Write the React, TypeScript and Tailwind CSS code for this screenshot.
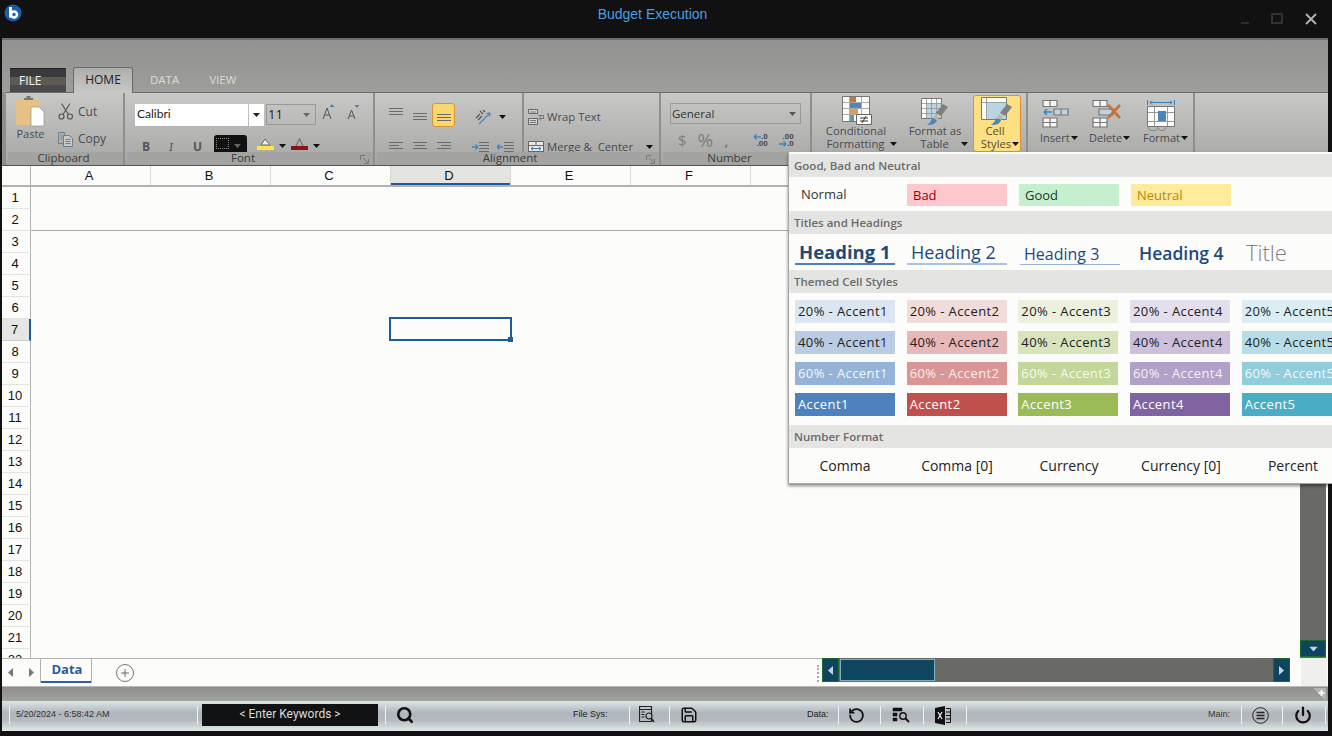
import { Search, Save, RotateCcw, Power, Plus } from 'lucide-react';

const columns = ['A', 'B', 'C', 'D', 'E', 'F', '', '', '', '', ''];
const rows = Array.from({ length: 22 }, (_, i) => i + 1);

const swatchRows = [
  [
    { text: '20% - Accent1', cls: 'bg-[#dce6f1] text-[#222]' },
    { text: '20% - Accent2', cls: 'bg-[#f2dcdb] text-[#222]' },
    { text: '20% - Accent3', cls: 'bg-[#ebf1de] text-[#222]' },
    { text: '20% - Accent4', cls: 'bg-[#e4dfec] text-[#222]' },
    { text: '20% - Accent5', cls: 'bg-[#daeef3] text-[#222]' },
  ],
  [
    { text: '40% - Accent1', cls: 'bg-[#b8cce4] text-[#222]' },
    { text: '40% - Accent2', cls: 'bg-[#e6b8b7] text-[#222]' },
    { text: '40% - Accent3', cls: 'bg-[#d8e4bc] text-[#222]' },
    { text: '40% - Accent4', cls: 'bg-[#ccc0da] text-[#222]' },
    { text: '40% - Accent5', cls: 'bg-[#b7dee8] text-[#222]' },
  ],
  [
    { text: '60% - Accent1', cls: 'bg-[#95b3d7] text-[#f4f6fa]' },
    { text: '60% - Accent2', cls: 'bg-[#da9694] text-[#f8eeee]' },
    { text: '60% - Accent3', cls: 'bg-[#c4d79b] text-[#f6f9ee]' },
    { text: '60% - Accent4', cls: 'bg-[#b1a0c7] text-[#f4f0f8]' },
    { text: '60% - Accent5', cls: 'bg-[#92cddc] text-[#f0f9fb]' },
  ],
  [
    { text: 'Accent1', cls: 'bg-[#4f81bd] text-white' },
    { text: 'Accent2', cls: 'bg-[#c0504d] text-white' },
    { text: 'Accent3', cls: 'bg-[#9bbb59] text-white' },
    { text: 'Accent4', cls: 'bg-[#8064a2] text-white' },
    { text: 'Accent5', cls: 'bg-[#4bacc6] text-white' },
  ],
];

function Caret({ className = '' }: { className?: string }) {
  return (
    <svg width="7" height="4" viewBox="0 0 7 4" className={className}>
      <path d="M0 0h7L3.500 4z" fill="currentColor" />
    </svg>
  );
}

function Lines({ className = '', widths = [14, 14, 14], align = 'left' }: { className?: string; widths?: number[]; align?: string }) {
  return (
    <svg width="14" height="7" viewBox="0 0 14 7" className={className}>
      {widths.map((w, i) => {
        const x = align === 'right' ? 14 - w : align === 'center' ? (14 - w) / 2 : 0;
        return <rect key={i} x={x} y={i * 3} width={w} height="1" fill="#6b6c6a" />;
      })}
    </svg>
  );
}

function PasteIcon() {
  return (
    <svg width="29" height="31" viewBox="0 0 29 31">
      <rect x="0" y="3" width="24" height="26" fill="#e6c186" />
      <path d="M8 4V2h2.500V0h4v2H17v2z" fill="#777" />
      <path d="M15 11h8l5 5v14H15z" fill="#fdfdfb" stroke="#8a8a88" strokeWidth="0.600" />
    </svg>
  );
}

function ScissorsIcon() {
  return (
    <svg width="16" height="17" viewBox="0 0 16 17" fill="none" stroke="#555" strokeWidth="1.200">
      <circle cx="3.500" cy="13.500" r="2.500" />
      <circle cx="12" cy="13.500" r="2.500" />
      <path d="M5 11.500 12 .500M10.500 11.500 3.500.500" />
    </svg>
  );
}

function CopyIcon() {
  return (
    <svg width="16" height="15" viewBox="0 0 16 15" fill="none" stroke="#6e7f8c" strokeWidth="1">
      <path d="M.5.500h6v11h-6z" />
      <path d="M5.500 3.500h6l3 3v8h-9z" fill="#c8c9c6" />
      <path d="M7.500 7.500h5M7.500 9.500h5M7.500 11.500h5" stroke="#5a88ad" />
      <path d="M2 3h3M2 5h3M2 7h3" stroke="#7a8d9a" />
    </svg>
  );
}

function GrowFont({ up }: { up: boolean }) {
  return (
    <svg width="13" height="16" viewBox="0 0 13 16" fill="none">
      <path d={up ? 'M1 15 5 4l4 11M2.500 11h5' : 'M1 15 4.500 6 8 15M2.200 12h4.500'} stroke="#555" strokeWidth="1" />
      <path d={up ? 'M7.500 3 10 0l2.500 3z' : 'M7.500 1h5L10 4z'} fill="#4a86b8" />
    </svg>
  );
}

function WrapIcon() {
  return (
    <svg width="16" height="16" viewBox="0 0 16 16" fill="none" stroke="#666">
      <path d="M.5.500h9v4h-9zM.5 9.500h9v6h-9z" fill="#d5d6d3" />
      <path d="M2 3h6M2 11.500h6M2 13.500h6" stroke="#777" />
      <path d="M10 6.500h5.500v3h-4M13 7.500l-2 2 2 2" stroke="#6a7a85" />
    </svg>
  );
}

function MergeIcon() {
  return (
    <svg width="16" height="15" viewBox="0 0 16 15" fill="none" stroke="#666" className="shrink-0">
      <path d="M.5.500h15v14H.5z" fill="#e8e9e6" />
      <path d="M.5 4.500h15M.5 10.500h15M8 .500v4M8 10.500v4" />
      <path d="M3 7.500h10M3 7.500l2-1.500M3 7.500 5 9M13 7.500 11 6M13 7.500 11 9" stroke="#3c7db0" />
    </svg>
  );
}

function OrientIcon() {
  return (
    <svg width="17" height="15" viewBox="0 0 17 15" fill="none" className="ml-[20px] mt-[7px]">
      <path d="M1 8 5 4M3 10l4-4" stroke="#555" strokeWidth="1.300" />
      <path d="M5 1l3 3M8 0l2 2" stroke="#555" strokeWidth="1.200" />
      <path d="M4 14 15 3M15 3l-3.500.500M15 3l-.500 3.500" stroke="#4a86b8" strokeWidth="1.200" />
    </svg>
  );
}

function IndentIcon({ back }: { back?: boolean }) {
  return (
    <svg width="17" height="10" viewBox="0 0 17 10" fill="none">
      <path d="M7 .500h10M7 3.500h10M7 6.500h10M7 9.500h10" stroke="#6b6c6a" />
      <path d={back ? 'M0 5h6M0 5l2.500-2.500M0 5l2.500 2.500' : 'M0 5h6M6 5 3.500 2.500M6 5 3.500 7.500'} stroke="#3c85c0" strokeWidth="1.300" />
    </svg>
  );
}

function DecimalIcon({ more }: { more?: boolean }) {
  return (
    <div className="relative w-[15px] h-[14px] text-right text-[8px] leading-[7px] font-['Liberation_Sans',sans-serif] font-bold text-[#444]">
      <div>{more ? '.00' : '.0'}</div>
      <div>{more ? '.0' : '.00'}</div>
      <svg width="8" height="6" viewBox="0 0 8 6" className={`absolute left-0 ${more ? 'top-[8px]' : 'top-px'}`}>
        <path d={more ? 'M0 3h7M7 3 4.500.500M7 3 4.500 5.500' : 'M8 3H1M1 3 3.500.500M1 3 3.500 5.500'} stroke="#3c85c0" strokeWidth="1.300" fill="none" />
      </svg>
    </div>
  );
}

function GridIcon() {
  return (
    <svg width="30" height="29" viewBox="0 0 30 29">
      <path d="M.5.500h27v25H.5z" fill="#fbfbf9" stroke="#777" />
      <path d="M8 6h11v6H8z" fill="#4f85b8" />
      <path d="M8 1h6v5H8z" fill="#c86f45" />
      <path d="M8 12h8v6H8z" fill="#de9d5b" />
      <path d="M8 18h4v7H8z" fill="#6c99a0" />
      <path d="M7.500 1v24M19.500 1v24M1 6.500h26M1 12.500h26M1 18.500h26" stroke="#aaa" fill="none" />
      <path d="M14.500 18.500h15v10h-15z" fill="#fdfdfb" stroke="#666" />
      <path d="M18 22h8M18 25h8M20 27l4-7" stroke="#333" fill="none" />
    </svg>
  );
}

function Brush({ x, y }: { x: number; y: number }) {
  return (
    <g transform={`translate(${x} ${y})`}>
      <path d="M17 0l5 3-7 9-5-3z" fill="#7f7f7d" />
      <path d="M9 10l4 3-2 3-4-2z" fill="#c2b79a" />
      <path d="M6 14l5 2c-1 4-4 5-10 5 3-2 4-4 5-7z" fill="#4f85b8" />
    </g>
  );
}

function TableIcon() {
  return (
    <svg width="28" height="27" viewBox="0 0 28 27">
      <path d="M.5.500h20v20H.5z" fill="#fbfbf9" stroke="#777" />
      <path d="M5 5h15v15H5z" fill="#bcd4e2" />
      <path d="M5.500 1v20M10.500 1v20M15.500 1v20M1 5.500h20M1 10.500h20M1 15.500h20" stroke="#8a8b88" fill="none" strokeWidth="0.700" />
      <Brush x={5} y={6} />
    </svg>
  );
}

function CellStylesIcon() {
  return (
    <svg width="32" height="28" viewBox="0 0 32 28">
      <path d="M.5.500h25v22H.5z" fill="#fbfbf9" stroke="#777" />
      <path d="M6 6h19v16H6z" fill="#b8d5e4" />
      <path d="M5.500 1v22M1 5.500h25" stroke="#8a8b88" fill="none" strokeWidth="0.800" />
      <Brush x={9} y={7} />
    </svg>
  );
}

function InsertIcon() {
  return (
    <svg width="27" height="28" viewBox="0 0 27 28" fill="none" stroke="#777" strokeWidth="1.200">
      <path d="M1 .500h14v6H1zM8 .500v6" fill="#f6f6f4" />
      <path d="M12 9h14v6H12zM19 9v6" fill="#bcd4e2" />
      <path d="M1 18h14v9H1zM8 18v9M1 22.500h14" fill="#f6f6f4" />
      <path d="M2 12h8M2 12l3-3M2 12l3 3" stroke="#3c85c0" strokeWidth="1.600" />
    </svg>
  );
}

function DeleteIcon() {
  return (
    <svg width="29" height="28" viewBox="0 0 29 28" fill="none" stroke="#777" strokeWidth="1.200">
      <path d="M1 .500h14v6H1zM8 .500v6" fill="#f6f6f4" />
      <path d="M7 9h14v6H7z" fill="#bcd4e2" />
      <path d="M1 18h14v9H1zM8 18v9M1 22.500h14" fill="#f6f6f4" />
      <path d="M16 5l12 13M28 5 16 18" stroke="#c8703f" strokeWidth="2.800" />
    </svg>
  );
}

function FormatIcon() {
  return (
    <svg width="28" height="31" viewBox="0 0 28 31" fill="none">
      <path d="M.5 0v5M27.500 0v5M3 2.500h22M3 2.500l2-2M3 2.500l2 2M25 2.500l-2-2M25 2.500l-2 2" stroke="#3c7db0" />
      <path d="M.5 6.500h27v20H.5z" fill="#fbfbf9" stroke="#777" />
      <path d="M7.500 7v19M20.500 7v19M1 12.500h26M1 21.500h26" stroke="#999" />
      <path d="M11 11h8v10h-8z" fill="#4a86b8" />
      <path d="M1 26.500l2 4h6l2-3 2 3h4l2-3" stroke="#888" />
    </svg>
  );
}

function Group({ width, label, labelPad = '', launcher, children }: { width: string; label?: string; labelPad?: string; launcher?: boolean; children: React.ReactNode }) {
  return (
    <div className={`${width} shrink-0 flex flex-col border-r-2 border-[#8e8f8c]`}>
      <div className="h-[59px] overflow-hidden">{children}</div>
      {label && (
        <div className={`relative h-[13px] ml-[2px] bg-[#a3a4a1] text-center text-[11.500px] leading-[12px] text-[#3b3b3b] ${labelPad}`}>
          {label}
          {launcher && (
            <svg width="9" height="9" viewBox="0 0 9 9" className="absolute right-[4px] top-[3px]" fill="none" stroke="#777">
              <path d="M.5 5V.500H5M3 3l5 5M8.500 4v4.500H4" />
            </svg>
          )}
        </div>
      )}
    </div>
  );
}

function StyleHeader({ children }: { children: React.ReactNode }) {
  return <div className="h-[23px] bg-[#e4e5e3] pl-[5px] text-[11.500px] leading-[23px] font-semibold text-[#6c6a6a]">{children}</div>;
}

function StatusSep({ className = '' }: { className?: string }) {
  return <div className={`w-px h-[18px] bg-[#f0f3f3] shrink-0 ${className}`} />;
}

export default function App() {
  return (
    <div className="relative w-[1332px] h-[736px] overflow-hidden bg-[#111111] flex flex-col font-['Open_Sans',sans-serif]">
      {/* Title bar */}
      <div className="relative h-[38px] shrink-0 flex justify-center pr-[27px] pt-[4px] text-[14px] leading-[20px] text-[#4c9fe0] font-['Liberation_Sans',sans-serif]">
        Budget Execution
        <svg width="20" height="20" viewBox="0 0 20 20" className="absolute left-[3px] top-[3px]">
          <circle cx="10" cy="10" r="8.500" fill="#1a5fa8" />
          <path d="M7.500 4v10.500" stroke="#fff" strokeWidth="3" />
          <circle cx="11" cy="11.500" r="3" fill="none" stroke="#fff" strokeWidth="2.500" />
        </svg>
        <div className="absolute right-[15px] top-[13px] flex items-start">
          <div className="w-[8px] h-[2px] bg-[#2b2d2e] mt-[9px]" />
          <div className="w-[12px] h-[11px] border-2 border-[#303234] ml-[22px]" />
          <svg width="12" height="12" viewBox="0 0 12 12" className="ml-[22px]">
            <path d="M1 1l10 10M11 1 1 11" stroke="#b4b6b6" strokeWidth="1.800" />
          </svg>
        </div>
      </div>

      <div className="ml-[2px] w-[1326px] flex-1 flex flex-col min-h-0">
        {/* Ribbon tabs */}
        <div className="relative z-10 h-[54px] shrink-0 flex items-end pl-[8px] border-t-2 border-[#6e6f6c] bg-[linear-gradient(#929390,#9d9e9b)]">
          <div className="w-[56px] h-[24px] bg-[linear-gradient(#3a3a3c_0%,#3a3a3c_35%,#5d5a56_36%,#5d5a56_70%,#4a4a4c_71%)] border-t border-[#222] pl-[9px] text-[12px] leading-[24px] text-[#f2f2f2]">FILE</div>
          <div className="ml-[7px] -mb-px w-[60px] h-[26px] rounded-t-[3px] border border-b-0 border-[#6a6b68] bg-[linear-gradient(#aeafac,#c8c9c6)] text-center text-[12px] leading-[23px] text-[#222]">HOME</div>
          <div className="ml-[17px] h-[24px] text-[11.500px] leading-[23px] text-[#dedbcb]">DATA</div>
          <div className="ml-[30px] h-[24px] text-[11.500px] leading-[23px] text-[#dedbcb]">VIEW</div>
        </div>

        {/* Ribbon body */}
        <div className="h-[74px] shrink-0 flex bg-[#8f908d] border-b border-[#555653]">
          <div className="ml-[4px] flex-1 flex border-t border-[#6b6c69] rounded-bl-[3px] bg-[linear-gradient(#c8c9c6,#a6a7a4)] text-[#4a4a52]">
            <Group width="w-[119px]" label="Clipboard" labelPad="pr-[4px]">
              <div className="flex pl-[10px] pt-[3px]">
                <div className="w-[29px] flex flex-col items-center text-[11px] leading-[14px]">
                  <PasteIcon />
                  <span>Paste</span>
                </div>
                <div className="ml-[13px] pt-[7px] text-[12px] leading-[16px]">
                  <div className="flex items-center gap-[4px]">
                    <ScissorsIcon />
                    <span>Cut</span>
                  </div>
                  <div className="flex items-center gap-[4px] mt-[11px]">
                    <CopyIcon />
                    <span>Copy</span>
                  </div>
                </div>
              </div>
            </Group>

            <Group width="w-[250px]" label="Font" labelPad="pr-[14px]" launcher>
              <div className="pt-[11px] pl-[10px]">
                <div className="flex items-start text-[#222]">
                  <div className="w-[113px] h-[22px] bg-white pl-[2px] text-[12px] leading-[20px] font-['Lato',sans-serif]">Calibri</div>
                  <div className="w-[15px] h-[22px] ml-px bg-white flex items-center justify-center text-[#222]"><Caret /></div>
                  <div className="w-[50px] h-[21px] ml-[2px] border border-[#9a9b98] pl-px flex items-center justify-between pr-[5px] text-[13px]">
                    <span>11</span>
                    <Caret className="text-[#666]" />
                  </div>
                  <div className="ml-[6px]"><GrowFont up /></div>
                  <div className="ml-[12px]"><GrowFont up={false} /></div>
                </div>
                <div className="flex items-start mt-[9px] text-[12px] leading-[16px] text-[#555]">
                  <span className="ml-[7px] mt-[4px] font-bold">B</span>
                  <span className="ml-[19px] mt-[4px] italic font-serif">I</span>
                  <span className="ml-[20px] mt-[4px] font-bold">U</span>
                  <div className="ml-[12px] w-[33px] h-[20px] rounded-[3px] bg-[#111] flex items-start pt-[3px] pl-[2px] gap-[5px] text-[#666]">
                    <div className="w-[13px] h-[11px] border border-dotted border-[#888]" />
                    <Caret className="mt-[6px]" />
                  </div>
                  <svg width="17" height="14" viewBox="0 0 17 14" className="ml-[10px] mt-[3px]">
                    <path d="M4 7l4-6 5 6z" fill="#eeeeea" stroke="#666" />
                    <rect y="8" width="17" height="4" fill="#fce44d" />
                  </svg>
                  <Caret className="ml-[5px] mt-[9px] text-[#111]" />
                  <svg width="17" height="14" viewBox="0 0 17 14" className="ml-[5px] mt-[3px]">
                    <path d="M4 10l4.500-9L13 10" fill="none" stroke="#777" strokeWidth="1.300" />
                    <rect y="8" width="17" height="4" fill="#8e1414" />
                  </svg>
                  <Caret className="ml-[5px] mt-[9px] text-[#111]" />
                </div>
              </div>
            </Group>

            <Group width="w-[286px]" label="Alignment" labelPad="pr-[16px]" launcher>
              <div className="flex h-full">
                <div className="w-[149px] shrink-0 border-r-2 border-[#8e8f8c] pl-[14px]">
                  <div className="flex items-start h-[38px] pt-[10px]">
                    <Lines className="mt-[5px]" />
                    <Lines className="ml-[10px] mt-[10px]" />
                    <div className="ml-[5px] w-[23px] h-[24px] rounded-[3px] border border-[#d9923a] bg-[#fbd86d] flex items-end justify-center pb-[5px]">
                      <Lines />
                    </div>
                    <OrientIcon />
                    <Caret className="ml-[7px] mt-[12px] text-[#111]" />
                  </div>
                  <div className="flex items-start mt-[11px]">
                    <Lines widths={[14, 10, 14]} />
                    <Lines widths={[14, 10, 14]} align="center" className="ml-[10px]" />
                    <Lines widths={[14, 10, 14]} align="right" className="ml-[10px]" />
                    <div className="ml-[21px]"><IndentIcon /></div>
                    <div className="ml-[8px]"><IndentIcon back /></div>
                  </div>
                </div>
                <div className="flex-1 pl-[4px] text-[11.300px] leading-[16px]">
                  <div className="flex items-center gap-[3px] mt-[15px]">
                    <WrapIcon />
                    <span className="mt-px">Wrap Text</span>
                  </div>
                  <div className="flex items-start gap-[3px] mt-[16px] whitespace-nowrap">
                    <MergeIcon />
                    <span className="-mt-[2px] whitespace-pre">Merge &amp;  Center</span>
                    <Caret className="ml-[10px] mt-[4px] text-[#111]" />
                  </div>
                </div>
              </div>
            </Group>

            <Group width="w-[151px]" label="Number" labelPad="pr-[14px]">
              <div className="pl-[9px] pt-[10px]">
                <div className="w-[131px] h-[21px] border border-[#9a9b98] pl-px pr-[4px] flex items-center justify-between text-[11.500px] text-[#333]">
                  <span>General</span>
                  <Caret className="text-[#555]" />
                </div>
                <div className="flex items-center mt-[7px] text-[#7e7e7c] text-[15px] leading-[18px]">
                  <span className="ml-[8px]">$</span>
                  <span className="ml-[11px] text-[19px]">%</span>
                  <span className="ml-[11px] font-bold">,</span>
                  <div className="ml-[24px]"><DecimalIcon /></div>
                  <div className="ml-[11px]"><DecimalIcon more /></div>
                </div>
              </div>
            </Group>

            <Group width="w-[216px]">
              <div className="flex h-full text-[11.300px] leading-[13px] text-center">
                <div className="ml-px w-[88px] shrink-0 flex flex-col items-center pt-[3px]">
                  <GridIcon />
                  <div className="-mt-px -ml-[2px]">Conditional</div>
                  <div className="flex items-center gap-[6px] pl-[10px]">Formatting <Caret className="text-[#111]" /></div>
                </div>
                <div className="ml-[-6px] w-[80px] shrink-0 flex flex-col items-center pt-[5px]">
                  <TableIcon />
                  <div className="-mt-px">Format as</div>
                  <div className="flex items-center gap-[12px] pl-[18px]">Table <Caret className="text-[#111]" /></div>
                </div>
                <div className="ml-[-2px] w-[48px] shrink-0 h-[57px] mt-[2px] rounded-[3px] border border-[#d9923a] bg-[#fde083] flex flex-col items-center pt-[1px] text-[#5a4a3a]">
                  <CellStylesIcon />
                  <div className="-mt-px pr-[4px]">Cell</div>
                  <div className="flex items-center gap-px pl-[6px]">Styles<Caret className="text-[#111]" /></div>
                </div>
              </div>
            </Group>

            <Group width="w-[167px]">
              <div className="flex text-[11px] leading-[13px]">
                <div className="ml-[14px] w-[46px] shrink-0 pt-[7px]">
                  <InsertIcon />
                  <div className="mt-[3px] -ml-[2px] flex items-center gap-px">Insert<Caret className="text-[#111]" /></div>
                </div>
                <div className="ml-[4px] w-[50px] shrink-0 pt-[7px]">
                  <DeleteIcon />
                  <div className="mt-[3px] -ml-[3px] flex items-center gap-px">Delete<Caret className="text-[#111]" /></div>
                </div>
                <div className="ml-[5px] w-[48px] shrink-0 pt-[7px]">
                  <FormatIcon />
                  <div className="-ml-[4px] flex items-center gap-px">Format<Caret className="text-[#111]" /></div>
                </div>
              </div>
            </Group>
          </div>
        </div>

        {/* Sheet */}
        <div className="h-[492px] shrink-0 flex bg-[#fcfdfb]">
          <div className="flex-1 flex flex-col min-w-0">
            <div className="h-[21px] shrink-0 flex border-b-2 border-[#b2b2b0] font-['Liberation_Sans',sans-serif] text-[13px] leading-[19px] text-center text-[#111]">
              <div className="w-[29px] shrink-0 border-r border-[#b2b2b0]" />
              {columns.map((c, i) => (
                <div key={i} className={`w-[120px] shrink-0 pr-[3px] border-r border-[#d6d6d4] ${c === 'D' ? 'bg-[#e4e5e3] shadow-[inset_0_-2px_0_#1e5aa0]' : ''}`}>{c}</div>
              ))}
            </div>
            <div className="flex-1 flex min-h-0">
              <div className="w-[29px] shrink-0 overflow-hidden font-['Liberation_Sans',sans-serif] text-[13px] leading-[21px] text-center text-[#111]">
                {rows.map((r) => (
                  <div key={r} className={`h-[22px] border-b pr-[2px] ${r === 7 ? 'bg-[#e6e7e5] border-b-[#cfcfcd] border-r-2 border-r-[#1e5aa0]' : 'border-b-[#e2e2e0] border-r border-r-[#b2b2b0]'}`}>{r}</div>
                ))}
              </div>
              <div className="relative flex-1">
                <div className="h-[44px] border-b border-[#a8a8a6]" />
                <div className="absolute left-[358px] top-[130px] w-[123px] h-[24px] border-2 border-[#1e5aa0]">
                  <div className="absolute right-[-3px] bottom-[-3px] w-[5px] h-[5px] bg-[#1e5aa0]" />
                </div>
              </div>
            </div>
          </div>
          <div className="w-[26px] shrink-0 mr-[1px] bg-[#696a66] flex flex-col justify-end pb-px">
            <div className="h-[17px] bg-[#0e4460] border border-[#1b6b2f] flex items-center justify-center text-[#c8d4da]"><Caret className="scale-125" /></div>
          </div>
          <div className="w-px" />
        </div>

        {/* Sheet tabs and horizontal scrollbar */}
        <div className="h-[28px] shrink-0 flex bg-[#fcfdfb]">
          <div className="w-[820px] shrink-0 flex border-t border-[#b2b2b0]">
            <div className="w-[38px] flex items-center justify-center gap-[16px] text-[#777]">
              <svg width="5" height="9" viewBox="0 0 5 9"><path d="M5 0v9L0 4.500z" fill="currentColor" /></svg>
              <svg width="5" height="9" viewBox="0 0 5 9"><path d="M0 0v9l5-4.500z" fill="currentColor" /></svg>
            </div>
            <div className="w-[52px] h-[25px] -mt-px pl-[2px] border border-b-0 border-[#b2b2b0] shadow-[inset_0_-2px_0_#2f5ea8] text-center text-[13px] leading-[20px] font-bold text-[#2f5a9e]">Data</div>
            <div className="ml-[24px] mt-[5px] w-[18px] h-[18px] rounded-full border border-[#777] flex items-center justify-center text-[#666]">
              <Plus size={12} strokeWidth={2} />
            </div>
            <div className="flex-1 flex justify-end pr-[3px] pt-[6px]">
              <div className="w-[2px] h-[17px] border-l-2 border-dotted border-[#aaa]" />
            </div>
          </div>
          <div className="w-[468px] h-[24px] shrink-0 flex bg-[#696a66] text-[#c8d4da]">
            <div className="w-[17px] bg-[#0e4460] border border-[#1b6b2f] flex items-center justify-center">
              <svg width="5" height="9" viewBox="0 0 5 9"><path d="M5 0v9L0 4.500z" fill="currentColor" /></svg>
            </div>
            <div className="w-[95px] ml-px my-[1px] bg-[#0e4660] border border-[#86aac0]" />
            <div className="flex-1" />
            <div className="w-[17px] bg-[#0e4460] border border-[#1b6b2f] flex items-center justify-center">
              <svg width="5" height="9" viewBox="0 0 5 9"><path d="M0 0v9l5-4.500z" fill="currentColor" /></svg>
            </div>
          </div>
          <div className="w-[11px] shrink-0" />
          <div className="w-[26px] shrink-0 bg-[#eff0ee]" />
          <div className="flex-1" />
        </div>

        {/* Grey strip */}
        <div className="h-[15px] shrink-0 flex justify-end items-center pr-[2px] border-t border-[#b9bab7] bg-[linear-gradient(#8e8f8c,#a2a39f)]">
          <svg width="13" height="13" viewBox="0 0 13 13">
            <path d="M0 0h13v13z" fill="#b4b5b2" />
            <path d="M8.500 2v6M5.500 5h6" stroke="#f4f4f2" strokeWidth="2" />
          </svg>
        </div>

        {/* Status bar */}
        <div className="h-[30px] shrink-0 flex items-center pb-[2px] bg-[linear-gradient(#dbe6e6_0%,#b0b5bd_40%,#b6bbc2_65%,#e2ebea_100%)] text-[#222] font-['Liberation_Sans',sans-serif]">
          <StatusSep className="ml-[7px]" />
          <span className="ml-[6px] w-[94px] whitespace-nowrap text-[9px] text-[#333]">5/20/2024 - 6:58:42 AM</span>
          <StatusSep className="ml-[87px]" />
          <div className="ml-[4px] w-[176px] h-[22px] bg-[#111214] text-center text-[12px] leading-[20px] text-[#dddddd] font-['Roboto',sans-serif]">&lt; Enter Keywords &gt;</div>
          <StatusSep className="ml-[7px]" />
          <Search size={18} strokeWidth={3.500} className="ml-[10px] text-[#111]" />
          <span className="ml-[159px] w-[32px] text-[9px] whitespace-nowrap">File Sys:</span>
          <StatusSep className="ml-[24px]" />
          <svg width="16" height="18" viewBox="0 0 16 18" fill="none" stroke="#222" className="ml-[9px]">
            <path d="M.5.500h12v15H.5zM.5 3.500h12" strokeWidth="1.200" />
            <path d="M2.500 6h3M2.500 8.500h3M2.500 11h3" />
            <circle cx="10" cy="10" r="3" fill="#b6bbc2" strokeWidth="1.200" />
            <path d="M12 12l3 4" strokeWidth="1.500" />
          </svg>
          <StatusSep className="ml-[14px]" />
          <Save size={18} strokeWidth={2} className="ml-[10px] text-[#111]" />
          <span className="ml-[109px] text-[9px] w-[22px] whitespace-nowrap">Data:</span>
          <StatusSep className="ml-[9px]" />
          <RotateCcw size={17} strokeWidth={2.500} className="ml-[9px] text-[#111]" />
          <StatusSep className="ml-[15px]" />
          <svg width="18" height="16" viewBox="0 0 18 16" fill="none" stroke="#111" className="ml-[11px]">
            <path d="M1 1h9v3H1zM1 6h4v3H1zM1 11h4v3H1z" fill="#111" strokeWidth="0.500" />
            <circle cx="11" cy="9" r="3.200" strokeWidth="1.400" />
            <path d="M13.500 11.500 17 15" strokeWidth="1.800" />
          </svg>
          <StatusSep className="ml-[13px]" />
          <svg width="16" height="19" viewBox="0 0 16 19" className="ml-[11px]">
            <path d="M0 2l10-2v19L0 17z" fill="#111" />
            <path d="M3 6l4 7M7 6l-4 7" stroke="#eee" strokeWidth="1.200" />
            <path d="M11 2.500h4.500v14H11M11 6h4M11 9.500h4M11 13h4" stroke="#111" fill="none" />
          </svg>
          <StatusSep className="ml-[15px]" />
          <span className="ml-[241px] w-[24px] text-[9px] whitespace-nowrap text-[#3a3a30]">Main:</span>
          <StatusSep className="ml-[9px]" />
          <svg width="17" height="17" viewBox="0 0 17 17" fill="none" stroke="#222" className="ml-[10px]">
            <circle cx="8.500" cy="8.500" r="7.800" />
            <path d="M4.500 5.500h8M4.500 8.500h8M4.500 11.500h8" strokeWidth="1.500" />
          </svg>
          <StatusSep className="ml-[13px]" />
          <Power size={18} strokeWidth={3} className="ml-[11px] text-[#111]" />
          <StatusSep className="ml-[13px]" />
        </div>
      </div>

      {/* Cell styles dropdown */}
      <div className="absolute left-[788px] top-[152px] right-0 h-[332px] pt-[2px] bg-[#fcfdfb] border-l border-b border-[#a8a9a6] shadow-[0_2px_3px_rgba(0,0,0,0.45)] overflow-hidden font-['Open_Sans',sans-serif]">
        <StyleHeader>Good, Bad and Neutral</StyleHeader>
        <div className="h-[34px] grid grid-cols-[100px_100px_100px_100px_100px] gap-x-[12px] pl-[6px] items-center text-[13px]">
          <div className="pl-[6px] mt-px text-[#333]">Normal</div>
          <div className="h-[22px] mt-[2px] pl-[6px] leading-[22px] bg-[#ffc7ce] text-[#9c0006]">Bad</div>
          <div className="h-[22px] mt-[2px] pl-[6px] leading-[22px] bg-[#c6efce] text-[#1e3a20]">Good</div>
          <div className="h-[22px] mt-[2px] pl-[6px] leading-[22px] bg-[#ffeb9c] text-[#b8860b]">Neutral</div>
        </div>
        <StyleHeader>Titles and Headings</StyleHeader>
        <div className="h-[36px] grid grid-cols-[100px_100px_100px_100px_100px] gap-x-[12px] pl-[6px] items-start text-[#1f497d] whitespace-nowrap">
          <div className="h-[31px] pl-[4px] border-b-2 border-[#4f81bd] text-[18.500px] leading-[36px] font-bold">Heading 1</div>
          <div className="h-[31px] pl-[4px] border-b-2 border-[#a7c5e3] text-[18px] leading-[36px] font-medium">Heading 2</div>
          <div className="h-[31px] ml-px -mr-px pl-[4px] border-b border-[#95b3d7] text-[16px] leading-[40px] font-medium">Heading 3</div>
          <div className="h-[31px] pl-[8px] text-[17.500px] leading-[38px] font-semibold">Heading 4</div>
          <div className="h-[31px] pl-[3px] text-[22px] leading-[36px] font-light text-[#80808c]">Title</div>
        </div>
        <StyleHeader>Themed Cell Styles</StyleHeader>
        <div className="h-[132px] pt-[7px] pl-[6px] grid grid-cols-[100px_100px_100px_100px_100px] gap-x-[11.670px] gap-y-[8px] content-start text-[13px] tracking-[0.400px] leading-[23px] whitespace-nowrap overflow-hidden">
          {swatchRows.flat().map((s) => (
            <div key={s.text} className={`h-[23px] pl-[3px] ${s.cls}`}>{s.text}</div>
          ))}
        </div>
        <StyleHeader>Number Format</StyleHeader>
        <div className="h-[35px] pl-[6px] grid grid-cols-[100px_100px_100px_100px_100px] gap-x-[12px] items-center text-center text-[14px] text-[#222]">
          <div>Comma</div>
          <div>Comma [0]</div>
          <div>Currency</div>
          <div>Currency [0]</div>
          <div>Percent</div>
        </div>
      </div>
    </div>
  );
}
